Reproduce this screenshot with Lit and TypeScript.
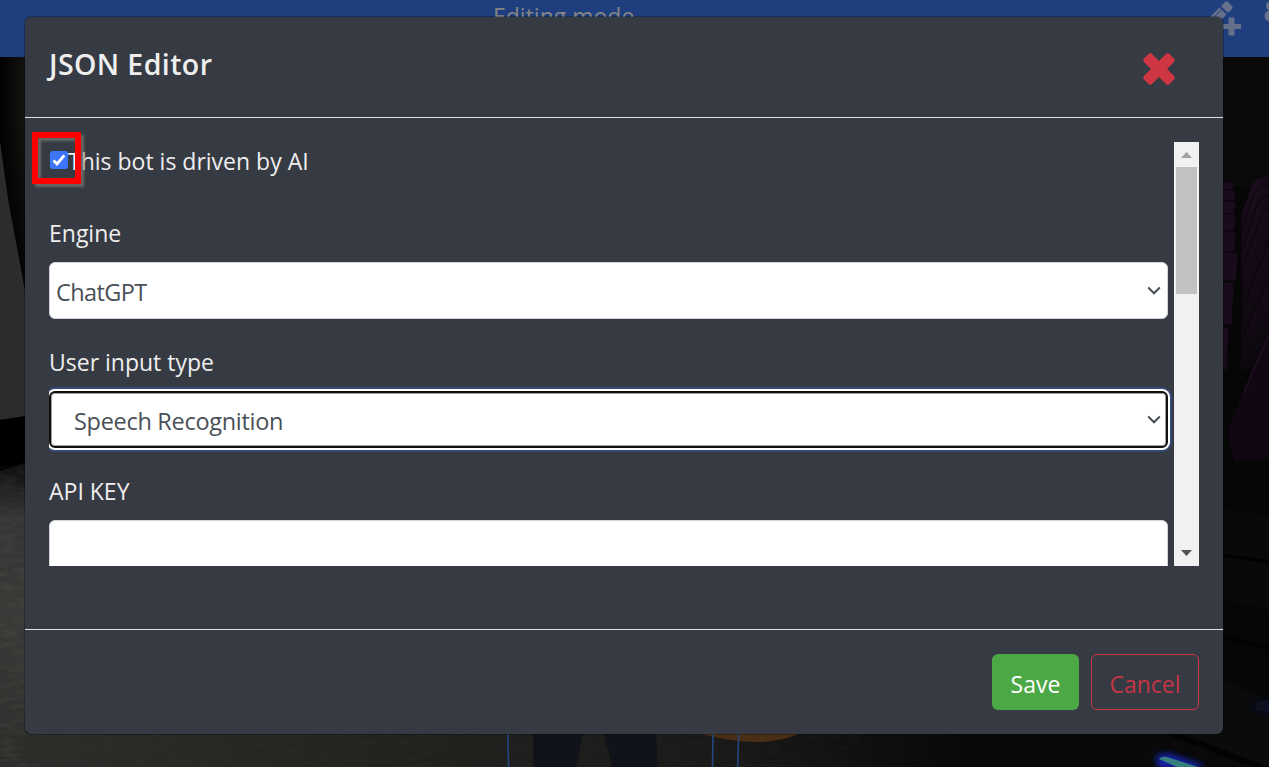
import { LitElement, html, css, svg } from "lit";
import { customElement, property } from "lit/decorators.js";
import { classMap } from "lit/directives/class-map.js";

@customElement("room-scene")
export class RoomScene extends LitElement {
  static styles = css`
    :host {
      display: block;
    }
    .scene {
      display: block;
      width: 1269px;
      height: 767px;
    }
  `;

  // far row of chairs, seen edge-on: top, bottom, right edge
  private farSeats = [
    [182, 190, 1234],
    [190, 201, 1236],
    [201, 214, 1236],
    [214, 231, 1236],
    [231, 252, 1236],
    [252, 281, 1238],
    [282, 325, 1234],
    [327, 370, 1229],
  ];

  render() {
    return html`
      <svg class="scene" viewBox="0 0 1269 767" aria-hidden="true">
        <defs>
          <linearGradient id="wall" x1="0" y1="0" x2="1" y2="0">
            <stop offset="0.1" stop-color="#020202" />
            <stop offset="1" stop-color="#161411" />
          </linearGradient>
          <linearGradient id="wall-fade" x1="0" y1="0" x2="0" y2="1">
            <stop offset="0" stop-color="#000" stop-opacity="0" />
            <stop offset="1" stop-color="#000" />
          </linearGradient>
          <linearGradient id="floor" x1="0" y1="0" x2="0" y2="1">
            <stop offset="0" stop-color="#0c0c0b" />
            <stop offset="0.18" stop-color="#353433" />
            <stop offset="0.5" stop-color="#3a3937" />
            <stop offset="1" stop-color="#2d2d2b" />
          </linearGradient>
          <linearGradient id="floor-fade" x1="0" y1="0" x2="1" y2="0">
            <stop offset="0" stop-color="#2d2d2b" />
            <stop offset="0.4" stop-color="#22221f" />
            <stop offset="0.75" stop-color="#191919" />
            <stop offset="1" stop-color="#090909" />
          </linearGradient>
          <linearGradient id="seat" x1="0" y1="0" x2="0.4" y2="1">
            <stop offset="0" stop-color="#260f28" />
            <stop offset="0.3" stop-color="#170b19" />
            <stop offset="1" stop-color="#0a060b" />
          </linearGradient>
          <filter id="glow" x="-40%" y="-80%" width="180%" height="260%">
            <feGaussianBlur stdDeviation="3" />
          </filter>
          <filter id="grain" x="0" y="0" width="100%" height="100%">
            <feTurbulence type="fractalNoise" baseFrequency="0.06 0.22" numOctaves="3" seed="4" />
            <feColorMatrix values="0 0 0 0 0.35  0 0 0 0 0.35  0 0 0 0 0.33  0.6 0 0 0 -0.22" />
          </filter>
        </defs>
        <rect width="1269" height="767" fill="#060606" />
        <rect y="57" width="26" height="250" fill="url(#wall)" />
        <rect y="120" width="26" height="200" fill="url(#wall-fade)" />
        <path d="M0 142L8 200L26 297V380L0 384.500Z" fill="#2c2c2c" />
        <path d="M0 384L26 380V420H0Z" fill="#000" />
        <path d="M0 142L8 200L26 297V416L0 420Z" fill="#2c2c2c" />
        <path d="M0 420L26 416V480H0Z" fill="#000" />
        <path d="M0 471L26 462V767H0Z" fill="url(#floor)" />
        <rect y="733" width="960" height="34" fill="url(#floor-fade)" />
        <path d="M0 476L26 466V767H0Z" filter="url(#grain)" opacity="0.3" />
        <rect y="733" width="860" height="34" filter="url(#grain)" opacity="0.1" />

        <path d="M533 733H583L576 767H533Z" fill="#11131a" />
        <path d="M604 733H656L658 767H612Z" fill="#11131a" />
        <path d="M698 733H801Q780 742 757 742Q730 742 698 733Z" fill="#4a2f16" />
        <g stroke="#234780" stroke-width="1.6" fill="none">
          <path d="M507.700 733L508.600 767" />
          <path d="M713 733L712.500 767" />
          <path d="M738.700 733L737.700 767" />
        </g>

        <rect x="1222" y="57" width="47" height="130" fill="#0a0a0a" />
        ${this.farSeats.map(
          ([top, bottom, right]) => svg`
            <path d="M1220 ${top}H${right - 2}L${right} ${top + 3}L${right - 2} ${bottom}H1220Z"
              fill="#190b1c" stroke="#09050a" stroke-width="1" />
          `
        )}
        <g fill="url(#seat)" stroke="#09050a">
          <path d="M1269 175Q1256 176 1251 186L1241 215V300L1269 250Z" />
          <path d="M1269 184Q1258 187 1253 196L1241 232V310H1269Z" />
          <path d="M1269 195Q1260 197 1256 207L1241 254V320H1269Z" />
          <path d="M1269 208Q1263 210 1259 222L1242 270V340H1269Z" />
          <path d="M1269 242L1243 306L1240 348L1269 335Z" />
          <path d="M1269 280L1243 336L1239 372L1269 366Z" />
        </g>
        <path d="M1269 333Q1255 362 1243 393L1229 426Q1229 446 1234 462L1269 458Z" fill="#100712" />
        <path d="M1269 336Q1256 362 1244 393" stroke="#210e24" fill="none" stroke-width="1.500" />
        <path d="M1222 508L1269 516V610L1222 600Z" fill="#090909" />
        <path d="M1222 555L1269 562M1222 637L1269 648" stroke="#020202" stroke-width="4" />
        <path d="M960 733H1190L1269 767H960Z" fill="#090909" />
        <path d="M1185 733L1269 767V700L1222 680V733Z" fill="#0a0b0d" />
        <path d="M1170 733L1260 767" stroke="#030303" stroke-width="6" />
        <ellipse cx="1268" cy="706" rx="14" ry="6" fill="#090b25" filter="url(#glow)" />
        <path d="M1160 767L1158 757L1168 755L1202 767Z" fill="#1524a8" stroke="#1524a8" stroke-width="4" filter="url(#glow)" />
        <path d="M1159 759Q1161 756 1167 757L1198 767H1177Z" fill="#35807f" />
      </svg>
    `;
  }
}

@customElement("select-field")
export class SelectField extends LitElement {
  static styles = css`
    :host {
      display: block;
    }
    .label {
      height: 36px;
      line-height: 34px;
      margin-bottom: 10px;
      font-size: 23px;
      color: #eee;
    }
    .box {
      box-sizing: border-box;
      height: 57px;
      width: 1119px;
      display: flex;
      align-items: center;
      justify-content: space-between;
      padding: 3px 6px 0 6px;
      border: 1px solid #ced4da;
      border-radius: 6px;
      background: #fff;
      color: #495057;
      font-size: 23.500px;
      letter-spacing: -0.3px;
    }
    .box.focused {
      padding: 3px 5px 0 23px;
      border: 2px solid #101010;
      box-shadow: inset 0 0 0 1px #a0a0a0, 0 0 0 2px #fff, 0 0 0 4px #344a78;
    }
    .box:not(.focused) .value {
      letter-spacing: -0.6px;
    }
    .chevron {
      width: 14px;
      height: 10px;
      margin-bottom: 2px;
    }
  `;

  @property() label = "";
  @property() value = "";
  @property({ type: Boolean }) focused = false;
  @property({ type: Boolean }) plain = false;

  render() {
    return html`
      <div class="label">${this.label}</div>
      <div class=${classMap({ box: true, focused: this.focused })}>
        <span class="value">${this.value}</span>
        ${this.plain
          ? ""
          : html`
              <svg class="chevron" viewBox="0 0 14 10">
                <path d="M1.200 1.500L7 7.300L12.800 1.500" fill="none" stroke="#495057" stroke-width="2" />
              </svg>
            `}
      </div>
    `;
  }
}

@customElement("app-root")
export class AppRoot extends LitElement {
  static styles = css`
    :host {
      display: block;
      position: relative;
      width: 1269px;
      height: 767px;
      overflow: hidden;
      background: #060606;
      font-family: "Open Sans", "Noto Sans", sans-serif;
    }
    .backdrop {
      position: absolute;
      inset: 0;
    }
    .topbar {
      position: absolute;
      inset: 0 0 auto 0;
      box-sizing: border-box;
      height: 57px;
      display: flex;
      justify-content: space-between;
      padding-left: 493px;
      background: #1e3e7d;
      color: #868686;
      font-size: 23px;
      line-height: 32px;
    }
    .tools {
      width: 60px;
      height: 40px;
    }
    .dialog {
      position: absolute;
      inset: 16px 45px 32px 24px;
      display: flex;
      flex-direction: column;
      border: 1px solid rgba(0, 0, 0, 0.25);
      border-radius: 7px;
      background: #363a42;
      background-clip: padding-box;
    }
    .header {
      box-sizing: border-box;
      height: 101px;
      display: flex;
      justify-content: space-between;
      align-items: flex-start;
      padding: 24px 46px 0 24px;
      border-bottom: 1px solid #dee2e6;
    }
    .title {
      margin: 0;
      font-size: 28.500px;
      line-height: 46px;
      font-weight: 600;
      letter-spacing: 0.4px;
      color: #eee;
    }
    .close {
      width: 36px;
      height: 36px;
      margin-top: 10px;
    }
    .body {
      flex: 1;
      padding: 24px 24px 0;
    }
    .viewport {
      display: flex;
      justify-content: space-between;
      height: 424px;
      overflow: hidden;
    }
    .fields {
      width: 1125px;
      height: 424px;
      overflow: hidden;
    }
    .check {
      display: flex;
      align-items: center;
      height: 36px;
      margin: 2px 0 36px;
      padding-left: 1px;
      font-size: 23px;
      color: #eee;
    }
    .check-label {
      margin-bottom: 2px;
    }
    .checkbox {
      width: 18px;
      height: 18px;
      margin: 0 0 4px 0;
    }
    .fields select-field {
      margin-bottom: 26px;
    }
    .scrollbar {
      width: 25px;
      height: 424px;
      display: flex;
      flex-direction: column;
      background: #f1f1f1;
    }
    .arrow {
      width: 25px;
      height: 25px;
    }
    .thumb {
      height: 127px;
      margin: 0 2px;
      background: #c1c1c1;
    }
    .arrow.down {
      margin-top: auto;
    }
    .footer {
      box-sizing: border-box;
      height: 105px;
      display: flex;
      justify-content: flex-end;
      gap: 12px;
      padding: 24px 24px 0;
      border-top: 1px solid #dee2e6;
    }
    .btn {
      box-sizing: border-box;
      height: 56px;
      padding: 3px 0 0;
      border-radius: 6px;
      font-family: inherit;
      font-size: 23px;
    }
    .save {
      width: 87px;
      border: 0;
      background: #4ca845;
      color: #fff;
      font-weight: 500;
    }
    .cancel {
      width: 108px;
      border: 1px solid #d03443;
      background: transparent;
      color: #c43543;
    }
    .marker {
      position: absolute;
      left: 32px;
      top: 132px;
      box-sizing: border-box;
      width: 49px;
      height: 52px;
      border: 6px solid #f00;
      filter: drop-shadow(3px 3px 1px rgba(115, 115, 110, 0.8));
    }
  `;

  render() {
    return html`
      <room-scene class="backdrop"></room-scene>
      <div class="topbar">
        <span>Editing mode</span>
        <svg class="tools" viewBox="1209 0 60 40">
          <g fill="#65718a">
            <path d="M1207 20L1219.500 7.500L1226.500 14.500L1221 20Z" />
            <path d="M1221 6L1225 2Q1226.500 0.500 1228 2L1232 6Q1233.500 7.500 1232 9L1228 13Z" />
            <path d="M1228.500 17.500H1234.500V24H1241V29H1234.500V35.500H1228.500V29H1222V24H1228.500Z" />
            <circle cx="1271" cy="6" r="5" />
            <circle cx="1270" cy="16" r="5.500" />
          </g>
          <path d="M1213 18L1221.500 9.500" stroke="#1e3e7d" stroke-width="1" />
        </svg>
      </div>
      <div class="dialog">
        <div class="header">
          <h1 class="title">JSON Editor</h1>
          <svg class="close" viewBox="-18 -18 36 36">
            <g fill="#cf3644">
              <rect x="-18" y="-5.700" width="36" height="11.400" rx="2.400" transform="rotate(45)" />
              <rect x="-18" y="-5.700" width="36" height="11.400" rx="2.400" transform="rotate(-45)" />
            </g>
          </svg>
        </div>
        <div class="body">
          <div class="viewport">
            <div class="fields">
              <div class="check">
                <svg class="checkbox" viewBox="0 0 18 18">
                  <rect width="18" height="18" rx="2.500" fill="#3b75fc" />
                  <path d="M3.500 9.500L7 13L14.300 4.300" fill="none" stroke="#fff" stroke-width="2.800" />
                </svg>
                <span class="check-label">This bot is driven by AI</span>
              </div>
              <select-field label="Engine" value="ChatGPT"></select-field>
              <select-field label="User input type" value="Speech Recognition" focused></select-field>
              <select-field label="API KEY" plain></select-field>
            </div>
            <div class="scrollbar">
              <svg class="arrow" viewBox="0 0 25 25">
                <path d="M7 16L12.500 10L18 16Z" fill="#a3a3a3" />
              </svg>
              <div class="thumb"></div>
              <svg class="arrow down" viewBox="0 0 25 25">
                <path d="M7 9L12.500 15L18 9Z" fill="#505050" />
              </svg>
            </div>
          </div>
        </div>
        <div class="footer">
          <button class="btn save">Save</button>
          <button class="btn cancel">Cancel</button>
        </div>
      </div>
      <div class="marker"></div>
    `;
  }
}

declare global {
  interface HTMLElementTagNameMap {
    "room-scene": RoomScene;
    "select-field": SelectField;
    "app-root": AppRoot;
  }
}
